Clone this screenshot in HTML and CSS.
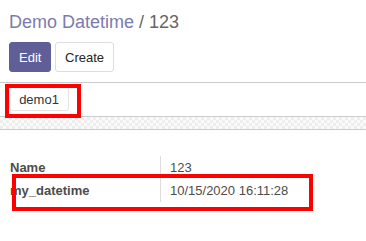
FILE: index.html
```html
<!DOCTYPE html>
<html lang="en">
<head>
    <meta charset="UTF-8">
    <title>Demo Datetime</title>
    <link rel="stylesheet" href="styles.css">
</head>
<body>
    <!-- Control panel -->
    <div class="control-panel">
        <h1 class="breadcrumb"><a href="#">Demo Datetime</a> <span class="active">/ 123</span></h1>
        <div class="buttons">
            <button class="btn btn-primary">Edit</button>
            <button class="btn btn-secondary">Create</button>
        </div>
    </div>

    <!-- Form header -->
    <div class="form-header">
        <button class="btn btn-secondary btn-small">demo1</button>
        <div class="highlight highlight-button"></div>
    </div>
    <div class="sheet-bg"></div>

    <!-- Form sheet -->
    <div class="sheet">
        <table class="fields">
            <tr>
                <td class="label">Name</td>
                <td class="value">123</td>
            </tr>
            <tr>
                <td class="label">my_datetime</td>
                <td class="value">10/15/2020 16:11:28</td>
            </tr>
        </table>
        <div class="highlight highlight-row"></div>
    </div>
</body>
</html>
```

FILE: styles.css
```css
body {
    font-family: "Liberation Sans", Arial, sans-serif;
    font-size: 13px;
    color: #4c4c4c;
    background-color: #fff;
    margin: 0;
}

/* Control panel */
.control-panel {
    padding: 12px 9px 10px;
    border-bottom: 1px solid #ccc;
}

.breadcrumb {
    font-size: 18px;
    font-weight: normal;
    line-height: 21px;
    margin: 0 0 9px;
    color: #666;
}

.breadcrumb a {
    color: #7c7bad;
    text-decoration: none;
}

.buttons {
    display: flex;
    gap: 4px;
}

.btn {
    font-family: inherit;
    font-size: 13px;
    height: 30px;
    padding: 0 9px;
    border-radius: 3px;
    border: 1px solid #ddd;
    cursor: pointer;
}

.btn-primary {
    background-color: #5f5e97;
    border-color: #5f5e97;
    color: #fff;
    width: 42px;
}

.btn-secondary {
    background-color: #fff;
    color: #212529;
    width: 59px;
}

.btn-small {
    height: 24px;
    width: 60px;
    color: #333;
    border-color: #e4e4e4;
}

/* Form header */
.form-header {
    position: relative;
    padding: 4px 9px 5px;
}

.sheet-bg {
    height: 12px;
    border-top: 1px solid #ccc;
    border-bottom: 1px solid #ccc;
    background-color: #fafafa;
    background-image:
        linear-gradient(45deg, #eee 25%, transparent 25%, transparent 75%, #eee 75%),
        linear-gradient(45deg, #eee 25%, transparent 25%, transparent 75%, #eee 75%);
    background-size: 6px 6px;
    background-position: 0 0, 3px 3px;
}

/* Sheet */
.sheet {
    position: relative;
    padding: 26px 10px;
}

.fields {
    border-collapse: collapse;
}

.fields td {
    height: 23px;
    padding: 0;
    vertical-align: middle;
}

.fields .label {
    font-weight: bold;
    width: 150px;
    border-right: 1px solid #ddd;
}

.fields .value {
    padding-left: 9px;
}

/* Red highlights drawn over the form */
.highlight {
    position: absolute;
    border: 4px solid #f00;
    box-sizing: border-box;
}

.highlight-button {
    left: 5px;
    top: 1px;
    width: 76px;
    height: 34px;
}

.highlight-row {
    left: 12px;
    top: 44px;
    width: 301px;
    height: 37px;
}
```
